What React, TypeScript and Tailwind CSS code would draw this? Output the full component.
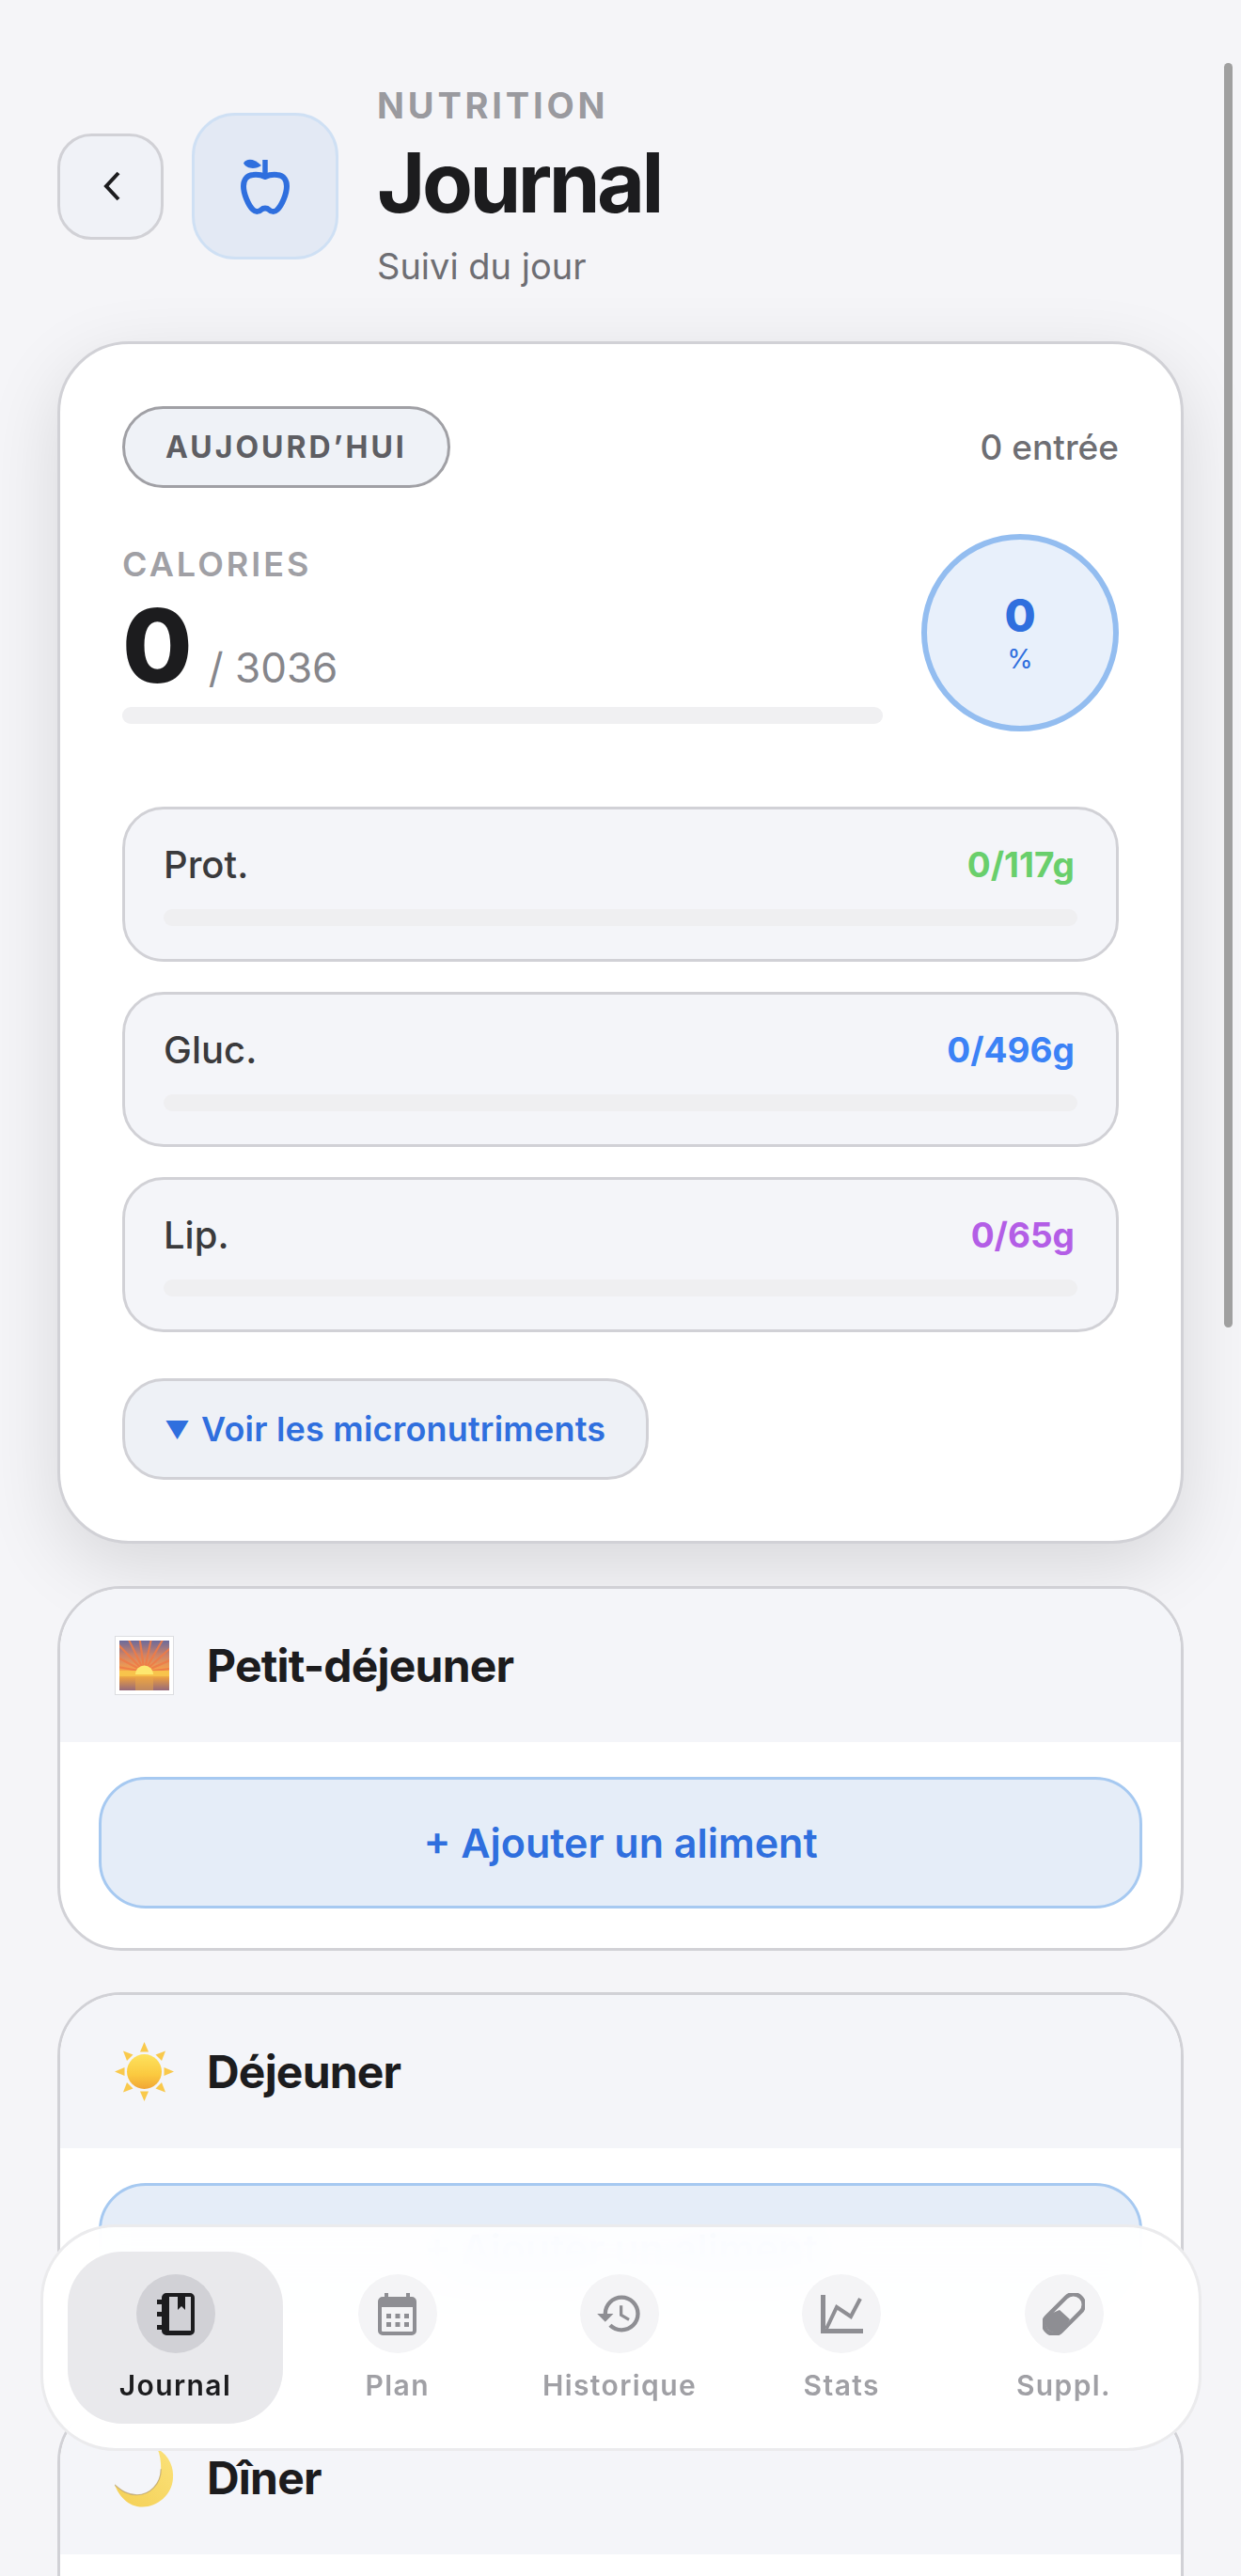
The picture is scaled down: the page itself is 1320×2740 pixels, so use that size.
import { MdHistory } from 'react-icons/md'

function AppleIcon() {
  return (
    <svg width="52" height="60" viewBox="0 0 52 60" fill="none">
      <path d="M26 2V19" stroke="#2f6fde" strokeWidth="5.5" />
      <path d="M3 5.5C6 0.5 14 0 22 8C16 12.5 6 12 3 5.5Z" fill="#2f6fde" />
      <path
        d="M26 20C22 18 18 17.5 13 18C6 18.5 3 24 3 30C3 38 8 50 13 55C16 58 20 57 22 55C24 53 28 53 30 55C32 57 36 58 39 55C44 50 49 38 49 30C49 24 46 18.5 39 18C34 17.5 30 18 26 20Z"
        stroke="#2f6fde"
        strokeWidth="6"
        strokeLinejoin="round"
      />
    </svg>
  )
}

function SunriseEmoji() {
  const rays = [-80, -62, -44, -26, -8, 12, 30, 48, 66, 84]
  return (
    <svg width="63" height="63" viewBox="0 0 63 63">
      <defs>
        <linearGradient id="sky" x1="0" y1="0" x2="0" y2="1">
          <stop offset="0" stopColor="#6a6a9c" />
          <stop offset="0.3" stopColor="#cf8468" />
          <stop offset="0.58" stopColor="#f5a04e" />
          <stop offset="0.66" stopColor="#f9c548" />
          <stop offset="0.76" stopColor="#e59a45" />
          <stop offset="1" stopColor="#95697a" />
        </linearGradient>
        <clipPath id="frame">
          <rect x="5" y="5" width="53" height="53" />
        </clipPath>
      </defs>
      <rect x="0.5" y="0.5" width="62" height="62" fill="#fff" stroke="#dcdde1" />
      <g clipPath="url(#frame)">
        <rect x="5" y="5" width="53" height="53" fill="url(#sky)" />
        <g stroke="#ee7c48" strokeWidth="2.2" opacity="0.9">
          {rays.map((r) => (
            <line
              key={r}
              x1="31.5"
              y1="38"
              x2={31.5 + 44 * Math.sin((r * Math.PI) / 180)}
              y2={38 - 44 * Math.cos((r * Math.PI) / 180)}
            />
          ))}
        </g>
        <rect x="5" y="37" width="53" height="6" fill="#f8c44c" opacity="0.85" />
        <path d="M22 41A9.500 9.500 0 0 1 41 41Z" fill="#fde870" />
        <rect x="22" y="43" width="19" height="15" fill="#e9a848" opacity="0.5" />
      </g>
    </svg>
  )
}

function SunEmoji() {
  return (
    <svg width="63" height="63" viewBox="0 0 63 63">
      <defs>
        <linearGradient id="sun" x1="0" y1="0" x2="0" y2="1">
          <stop offset="0" stopColor="#fde25e" />
          <stop offset="0.6" stopColor="#fbc93f" />
          <stop offset="1" stopColor="#f0a535" />
        </linearGradient>
      </defs>
      <circle cx="31.5" cy="31.5" r="18.5" fill="url(#sun)" />
      <g fill="#f9c94c">
        <path d="M31.5 0L36 10.5H27Z" />
        <path d="M31.5 63L27 52.5H36Z" />
        <path d="M0 31.5L10.5 27V36Z" />
        <path d="M63 31.5L52.5 36V27Z" />
        <path d="M9 9.500L19.500 13.500L13 20Z" />
        <path d="M54 9.500L50 20L43.500 13.500Z" />
        <path d="M9 53.500L13 43L19.500 49.500Z" />
        <path d="M54 53.500L43.500 49.500L50 43Z" />
      </g>
    </svg>
  )
}

function MoonEmoji() {
  return (
    <svg width="64" height="64" viewBox="0 0 64 64">
      <defs>
        <linearGradient id="moon" x1="0" y1="1" x2="1" y2="0">
          <stop offset="0" stopColor="#f4cf55" />
          <stop offset="1" stopColor="#fbe27a" />
        </linearGradient>
      </defs>
      <path
        d="M46 0C60 8 64 22 63 32C62 50 46 63 30 63C14 63 4 50 0 39C8 46 14 50 24 50C38 50 50 38 50 22C50 14 49 6 46 0Z"
        fill="url(#moon)"
      />
      <path d="M0 39C8 46 14 50 24 50C38 50 50 38 50 22" fill="none" stroke="#b59a62" strokeWidth="1.2" opacity="0.7" />
    </svg>
  )
}

function JournalIcon() {
  return (
    <svg width="40" height="45" viewBox="0 0 40 45" fill="#1c1c1e">
      <path fillRule="evenodd" d="M10 0H35A5 5 0 0 1 40 5V40A5 5 0 0 1 35 45H10A5 5 0 0 1 5 40V5A5 5 0 0 1 10 0ZM13 4V40H36V4Z" />
      <path d="M22 4H30V18L26 14L22 18Z" />
      <rect x="0" y="7" width="9" height="5" />
      <rect x="0" y="20" width="9" height="5" />
      <rect x="0" y="34" width="9" height="5" />
    </svg>
  )
}

function CalendarIcon() {
  return (
    <svg width="41" height="45" viewBox="0 0 41 45" fill="#8e8e93">
      <rect x="2" y="6" width="37" height="37" rx="3" fill="none" stroke="#8e8e93" strokeWidth="4" />
      <rect x="2" y="6" width="37" height="9" />
      <rect x="7" y="0" width="4" height="7" />
      <rect x="30" y="0" width="4" height="7" />
      {[9, 18.5, 28].map((x) => (
        <g key={x}>
          <rect x={x} y="22" width="5" height="5" />
          <rect x={x} y="31" width="5" height="5" />
        </g>
      ))}
    </svg>
  )
}

function StatsIcon() {
  return (
    <svg width="45" height="41" viewBox="0 0 45 41" fill="none" stroke="#8e8e93" strokeWidth="5">
      <path d="M2.500 0V38.500H45" />
      <path d="M6 36L17 13L32 23L42 4" strokeWidth="4" />
    </svg>
  )
}

function PillIcon() {
  return (
    <svg width="45" height="45" viewBox="0 0 45 45" fill="none">
      <rect x="-3" y="11.500" width="51" height="22" rx="11" transform="rotate(-45 22.500 22.500)" stroke="#8e8e93" strokeWidth="4.500" />
      <path d="M18 18L29 28L22 39A11 11 0 0 1 6 23Z" fill="#8e8e93" />
    </svg>
  )
}

const macros = [
  { label: 'Prot.', value: '0/117g', color: 'text-[#69cf6c]' },
  { label: 'Gluc.', value: '0/496g', color: 'text-[#3b82f6]' },
  { label: 'Lip.', value: '0/65g', color: 'text-[#b35ee6]' },
]

function MealCard({ title, emoji, action = true }: { title: string; emoji: React.ReactNode; action?: boolean }) {
  return (
    <div className="overflow-hidden rounded-[68px] border-[3px] border-[#d1d1d6] bg-white">
      <div className="flex h-[163px] items-center gap-[35px] bg-[#f4f5f9] pl-[58px]">
        <div className="flex h-[63px] w-[63px] items-center justify-center">{emoji}</div>
        <h2 className="text-[48px] font-bold tracking-[-0.8px] text-[#1c1c1e]">{title}</h2>
      </div>
      <div className="h-[219px] px-[41px] pt-[37px]">
        {/* the last card runs off the page before its button starts */}
        {action && (
          <button className="flex h-[140px] w-full items-center justify-center rounded-[50px] border-[3px] border-[#a6c9f1] bg-[#e5edf8] text-[43px] font-semibold text-[#2f6fde]">
            + Ajouter un aliment
          </button>
        )}
      </div>
    </div>
  )
}

const navItems = [
  { label: 'Journal', icon: <JournalIcon />, active: true },
  { label: 'Plan', icon: <CalendarIcon /> },
  { label: 'Historique', icon: <MdHistory size={52} color="#8e8e93" /> },
  { label: 'Stats', icon: <StatsIcon /> },
  { label: 'Suppl.', icon: <PillIcon /> },
]

function BottomNav() {
  return (
    <nav className="absolute top-[2366px] left-[43px] z-10 flex h-[241px] w-[1235px] items-center justify-between rounded-[80px] border-[3px] border-[#ebebed] bg-white/95 pr-[29px] pl-[26px] backdrop-blur-xl">
      {navItems.map((item) => (
        <div
          key={item.label}
          className={`flex h-[183px] w-[229px] flex-col items-center rounded-[58px] pt-[24px] ${item.active ? 'bg-[#e9e9ec]' : ''}`}
        >
          <div
            className={`flex h-[84px] w-[84px] items-center justify-center rounded-full ${item.active ? 'bg-[#d1d1d6]' : 'bg-[#f4f4f6]'}`}
          >
            {item.icon}
          </div>
          <span
            className={`mt-[14px] text-[30px] leading-[40px] font-semibold tracking-[1.4px] ${item.active ? 'text-[#1c1c1e]' : 'text-[#a0a0a5]'}`}
          >
            {item.label}
          </span>
        </div>
      ))}
    </nav>
  )
}

export default function App() {
  return (
    <div className="relative h-[2740px] w-[1320px] overflow-hidden bg-[#f5f5f8] [font-family:Inter,'Liberation_Sans',sans-serif]">
      <div className="px-[61px] pt-[90px]">
        {/* header */}
        <header className="flex items-center">
          <button className="flex h-[113px] w-[113px] items-center justify-center rounded-[36px] border-[3px] border-[#d1d1d6] bg-[#f0f2f7]">
            <svg width="26" height="32" viewBox="0 0 26 32" fill="none" stroke="#1c1c1e" strokeWidth="4">
              <path d="M21 2L8 16L21 30" />
            </svg>
          </button>
          <div className="ml-[30px] flex h-[156px] w-[156px] items-center justify-center rounded-[46px] border-[3px] border-[#cfe0f4] bg-[#e3e9f4]">
            <AppleIcon />
          </div>
          <div className="ml-[41px] flex flex-col">
            <span className="text-[38px] leading-[44px] font-bold tracking-[3.8px] text-[#9a9a9f]">NUTRITION</span>
            <h1 className="mt-[10px] text-[88px] leading-[100px] font-bold tracking-[-3.5px] text-[#1c1c1e]">Journal</h1>
            <span className="mt-[16px] text-[38px] leading-[46px] text-[#6e6e73]">Suivi du jour</span>
          </div>
        </header>

        {/* daily summary */}
        <section className="mt-[57px] rounded-[76px] border-[3px] border-[#d1d1d6] bg-white px-[66px] pt-[66px] pb-[65px] shadow-[0_24px_80px_rgba(0,0,0,0.12)]">
          <div className="flex items-center justify-between">
            <span className="flex h-[87px] items-center rounded-full border-[3px] border-[#a0a0a5] bg-[#eff2f7] px-[43px] text-[32px] font-bold tracking-[3px] text-[#5e5e63]">
              AUJOURD’HUI
            </span>
            <span className="text-[37px] font-medium text-[#6e6e73]">0 entrée</span>
          </div>

          <div className="mt-[49px] flex items-start justify-between">
            <div className="w-[809px] pt-[10px]">
              <div className="text-[36px] leading-[44px] font-semibold tracking-[3px] text-[#a0a0a5]">CALORIES</div>
              <div className="mt-[12px] flex h-[106px] items-baseline gap-[19px]">
                <span className="text-[108px] leading-[106px] font-extrabold tracking-[-2px] text-[#1c1c1e]">0</span>
                <span className="text-[44px] leading-[46px] text-[#86868b]">/ 3036</span>
              </div>
              <div className="mt-[12px] h-[18px] rounded-full bg-[#f0f0f2]" />
            </div>
            <div className="flex h-[210px] w-[210px] flex-col items-center justify-center rounded-full border-[6px] border-[#93bdf0] bg-[#e8f0fb]">
              <span className="text-[48px] leading-[56px] font-extrabold text-[#2f6fde]">0</span>
              <span className="text-[28px] leading-[36px] text-[#2f6fde]">%</span>
            </div>
          </div>

          <div className="mt-[80px] flex flex-col gap-[32px]">
            {macros.map((m) => (
              <div key={m.label} className="h-[165px] rounded-[44px] border-[3px] border-[#d1d1d6] bg-[#f4f5f9] px-[41px] pt-[36px]">
                <div className="flex h-[46px] items-center justify-between pr-[3px]">
                  <span className="text-[40px] font-medium text-[#3a3a3c]">{m.label}</span>
                  <span className={`text-[37px] font-bold ${m.color}`}>{m.value}</span>
                </div>
                <div className="mt-[24px] h-[18px] rounded-full bg-[#efeff1]" />
              </div>
            ))}
          </div>

          <button className="mt-[49px] flex h-[108px] w-[560px] items-center gap-[12px] rounded-[44px] border-[3px] border-[#d1d1d6] bg-[#eef1f6] pl-[42px] text-[36px] font-semibold tracking-[0.2px] text-[#2f6fde]">
            <span className="text-[26px]">▼</span>
            <span>Voir les micronutriments</span>
          </button>
        </section>

        {/* meals */}
        <div className="mt-[45px] flex flex-col gap-[44px]">
          <MealCard title="Petit-déjeuner" emoji={<SunriseEmoji />} />
          <MealCard title="Déjeuner" emoji={<SunEmoji />} />
          <MealCard title="Dîner" emoji={<MoonEmoji />} action={false} />
        </div>
      </div>

      <BottomNav />

      {/* scrollbar */}
      <div className="absolute top-[67px] right-[9px] z-20 h-[1345px] w-[9px] rounded-full bg-[#a0a0a0]" />
    </div>
  )
}
